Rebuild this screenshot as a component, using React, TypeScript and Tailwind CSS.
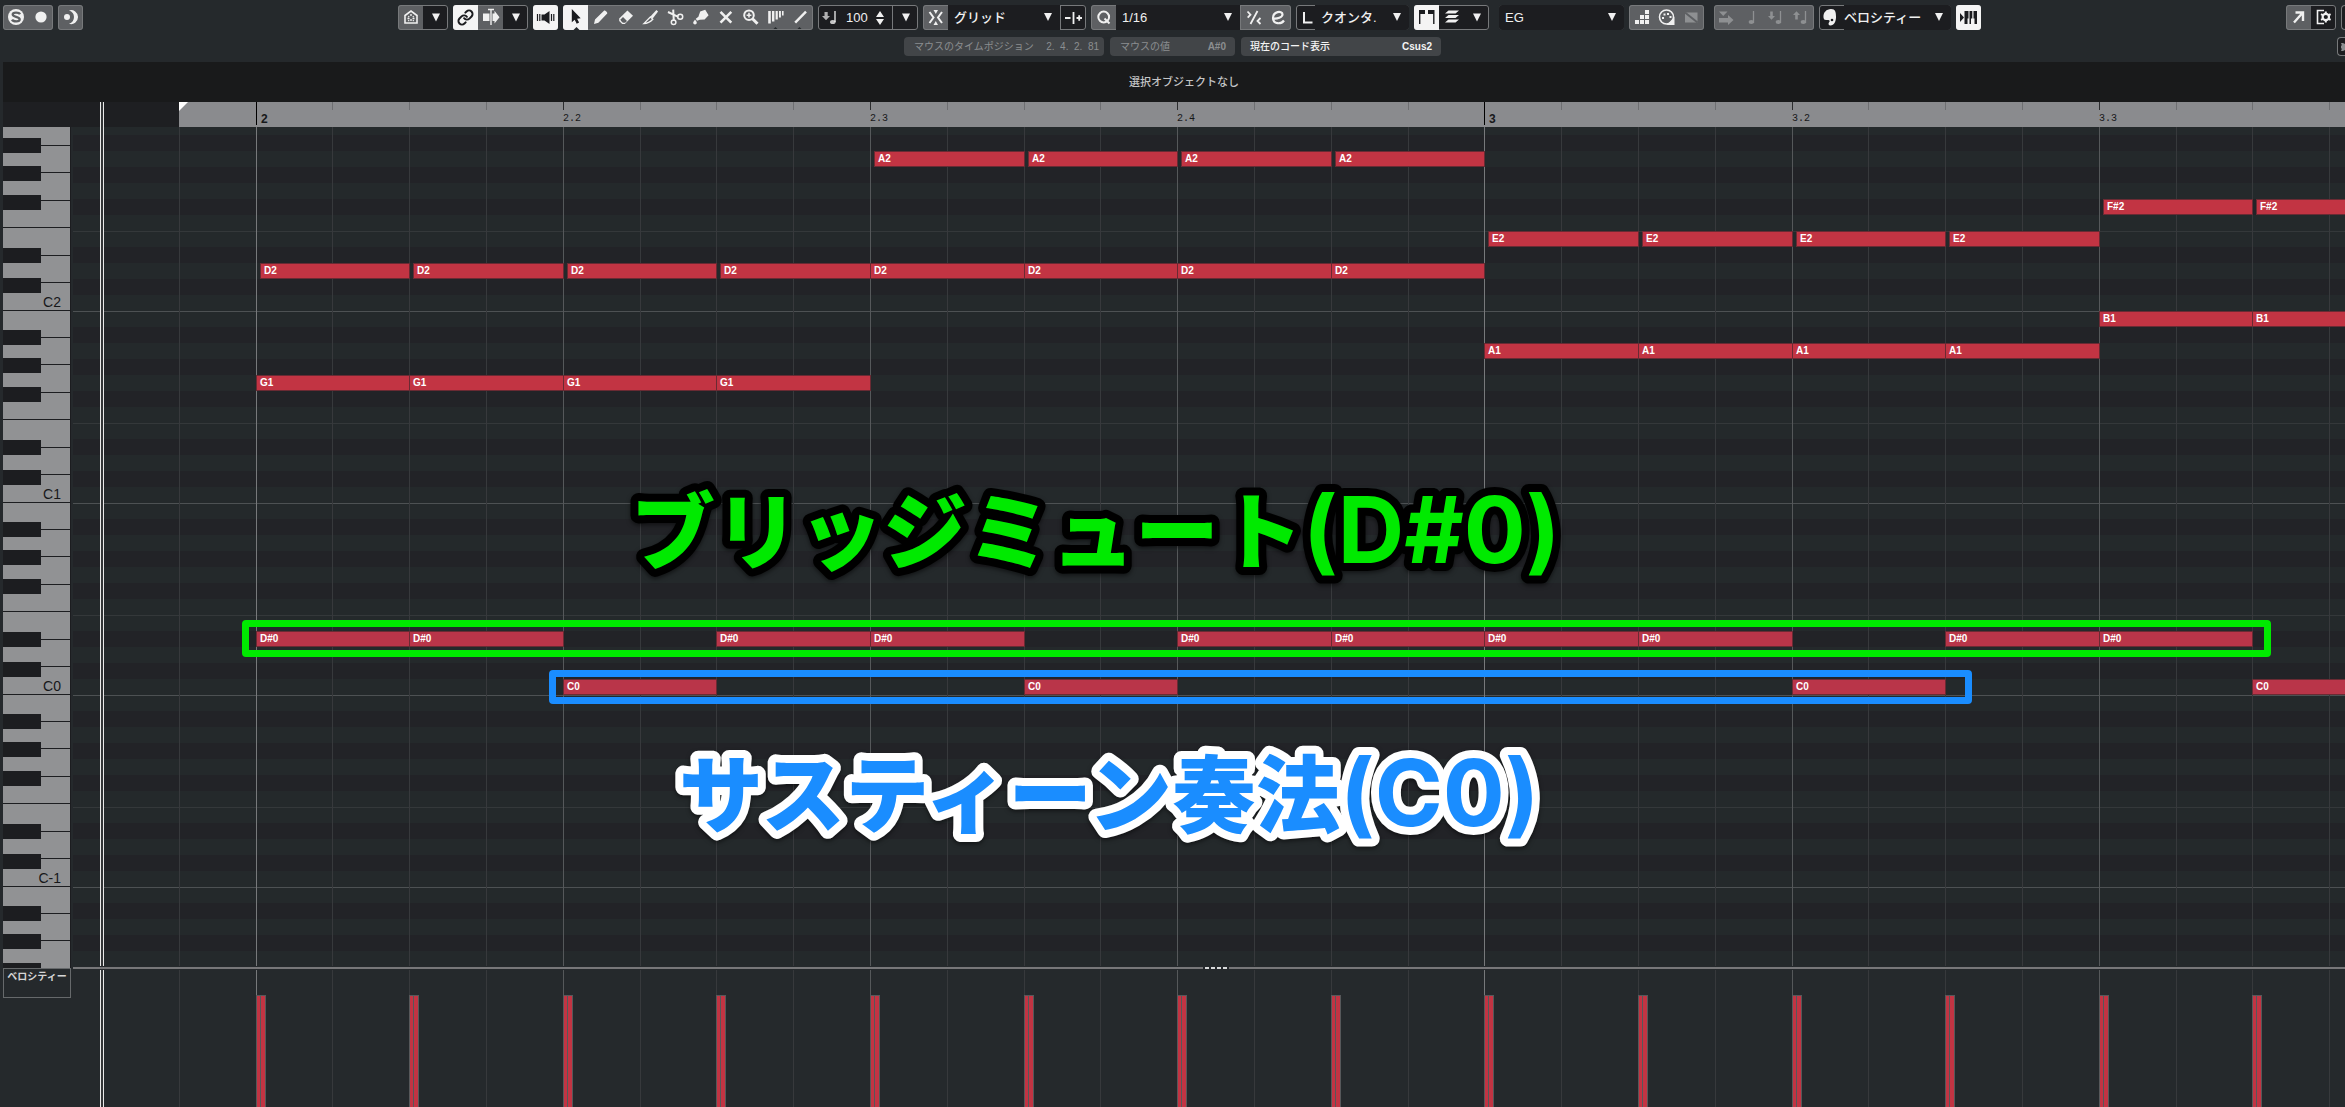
import type { ReactNode } from 'react'
import { clsx } from 'clsx'
import { Link } from 'lucide-react'

// Timeline: bar 2 begins 183px into the grid, a sixteenth is 76.8px wide
const BAR_START = 183
const SIXTEENTH = 76.8
const ROW = 16
// The grid opens in the middle of B2, 8px below its upper edge
const TOP_OFFSET = 8

const PITCHES = ['B', 'A#', 'A', 'G#', 'G', 'F#', 'F', 'E', 'D#', 'D', 'C#', 'C']
const OCTAVES = [2, 1, 0, -1, -2]

const toX = (step: number) => Math.floor(BAR_START + step * SIXTEENTH)

type Note = { name: string; step: number; late?: boolean }

const repeat = (name: string, steps: number[], late = false): Note[] =>
  steps.map((step) => ({ name, step, late }))

const NOTES: Note[] = [
  ...repeat('A2', [8, 10, 12, 14], true),
  ...repeat('F#2', [24, 26], true),
  ...repeat('E2', [16, 18, 20, 22], true),
  ...repeat('D2', [0, 2, 4, 6], true),
  ...repeat('D2', [8, 10, 12, 14]),
  ...repeat('B1', [24, 26]),
  ...repeat('A1', [16, 18, 20, 22]),
  ...repeat('G1', [0, 2, 4, 6]),
  ...repeat('D#0', [0, 2, 6, 8, 12, 14, 16, 18, 22, 24]),
  ...repeat('C0', [4, 10, 20, 26]),
]

const STEPS = Array.from({ length: 29 }, (_, i) => i - 1)
const VELOCITIES = Array.from({ length: 14 }, (_, i) => i * 2)

function noteTop(name: string) {
  const octave = Number(name.slice(-1))
  const pitch = PITCHES.indexOf(name.slice(0, -1))
  return (2 - octave) * 12 * ROW + pitch * ROW - TOP_OFFSET
}

export default function App() {
  return (
    <div className="flex min-h-screen flex-col overflow-hidden bg-[#25292c] font-['Liberation_Sans','Noto_Sans_CJK_JP',sans-serif] text-[#f0f0f0]">
      <Toolbar />
      <InfoLine />
      <div className="ml-[3px] flex h-10 items-center justify-center bg-[#191a1b] pl-5 text-[11px] font-medium text-[#c4c5c6]">
        選択オブジェクトなし
      </div>
      <Ruler />
      <div className="flex pl-[3px]">
        <Keyboard />
        <NoteGrid />
      </div>
      <VelocityLane />
    </div>
  )
}

/* ---------- toolbar ---------- */

function Toolbar() {
  return (
    <header className="flex h-[30px] items-end">
      <div className="ml-[3px] flex gap-[5px]">
        <Group>
          <Tool label="ソロ"><SoloIcon /></Tool>
          <Tool label="録音"><circle cx="13" cy="12" r="5.6" fill="currentColor" /></Tool>
        </Group>
        <Group>
          <Tool label="レトロスペクティブ録音">
            <path d="M11 5.4a7 7 0 1 1 0 13.4a7 7 0 0 0 0-13.4Z" fill="currentColor" />
            <circle cx="9" cy="12" r="3" fill="currentColor" />
          </Tool>
        </Group>
      </div>

      <div className="flex flex-1 justify-center gap-[5px] pl-2.5">
        <Group>
          <Tool label="ホーム">
            <path d="M7 18V10.5L13 6l6 4.5V18Z" fill="none" stroke="currentColor" strokeWidth="1.6" />
            <path d="M13 9v2M13 14v2M9.5 13.5h2M14.5 13.5h2M10.3 11.3l.8.8M15.7 11.3l-.8.8M10.3 16l.8-.8M15.7 16l-.8-.8" stroke="currentColor" strokeWidth="1.4" />
          </Tool>
          <Arrow />
        </Group>
        <Group>
          <button type="button" aria-label="リンク" className="relative grid w-[25px] place-items-center bg-[#f4f4f4] text-[#1b1c1f]">
            <Link size={17} strokeWidth={2.8} />
          </button>
          <Tool label="オートスクロール">
            <path d="M5 8.5h6.5v7.5H5zM14.5 8.5h2V5.8l5 6.4-5 6.4V16h-2z" fill="currentColor" />
            <path d="M10 4.5h6M13 4.5V20" stroke="currentColor" strokeWidth="1.4" />
          </Tool>
          <Arrow />
        </Group>
        <Group>
          <Tool label="試聴" active>
            <path d="M8.5 9.5h3L16.5 6v13l-5-3.5h-3z" fill="currentColor" />
            <path d="M4.5 9v7M6.8 9v7M18.5 9v7M20.8 9v7" stroke="currentColor" strokeWidth="1.2" />
          </Tool>
        </Group>
        <Group>
          <Tool label="選択" active>
            <path d="M8.8 4v13.2l2.9-2.5 2 4.1 2.4-1.2-2-3.9 3.6-.5Z" fill="currentColor" />
            <path d="M10.5 25 13.5 22l3 3Z" fill="#25292c" />
          </Tool>
          <Tool label="鉛筆">
            <path d="m6 19 1-4.6L16.2 5.6c.8-.8 3.8 2.2 3 3L10.4 17.8Z" fill="currentColor" />
          </Tool>
          <Tool label="消しゴム">
            <path d="M6.2 13.6 14.4 5.4l5.6 5.4-8.2 8.2H9.2L6.2 16Z" fill="currentColor" />
            <path d="m7.8 14.3 2.2-2.2 4 4-1.8 1.7h-2.3l-2.1-2Z" fill="#5e6063" />
          </Tool>
          <Tool label="カッター">
            <path d="m5.8 18.6 6.6-6.6 2.4 2.2c-2.4 2.6-5.2 4.2-9 4.4Z" fill="none" stroke="currentColor" strokeWidth="1.3" />
            <path d="m12.4 11.6 6-6.6 1.7 1.6-5.4 6.8Z" fill="currentColor" />
          </Tool>
          <Tool label="はさみ">
            <path d="m5 7 10.2 4.8M10.2 4.6l.6 11.4" stroke="currentColor" strokeWidth="2" />
            <circle cx="10.6" cy="17.3" r="2.3" fill="none" stroke="currentColor" strokeWidth="1.5" />
            <circle cx="17.2" cy="11.8" r="2.5" fill="none" stroke="currentColor" strokeWidth="1.5" />
          </Tool>
          <Tool label="のり">
            <path d="m12.2 6.6 5-1.8 3.4 5.4-4 4.2-4.8.4-2.8 1-1.2-2 2.6-2Z" fill="currentColor" />
            <path d="M7 14.5c1.4 1.9 1.8 2.6 1.8 3.3a1.8 1.8 0 0 1-3.6 0c0-.7.6-1.4 1.8-3.3Z" fill="currentColor" />
          </Tool>
          <Tool label="ミュート">
            <path d="m7.5 6.8 10.8 10.8M18.3 6.8 7.5 17.6" stroke="currentColor" strokeWidth="2.6" />
          </Tool>
          <Tool label="ズーム">
            <circle cx="11" cy="10.2" r="4.8" fill="none" stroke="currentColor" strokeWidth="2" />
            <path d="M8.6 10.2h4.8M11 7.8v4.8" stroke="currentColor" strokeWidth="1.6" />
            <path d="m14.5 13.7 5 5" stroke="currentColor" strokeWidth="3" />
          </Tool>
          <Tool label="コンプ">
            <path d="M5.2 6h2.6v12.5H5.2zM9 6h2.4v10.5H9zM12.6 6h2.2v8.6h-2.2zM16 6h1.9v6.6H16zM19 6h1.6v4.6H19z" fill="currentColor" />
            <path d="M9.5 25 12.5 22l3 3Z" fill="#25292c" />
          </Tool>
          <Tool label="ライン">
            <path d="m7.2 17.6 10.8-11" stroke="currentColor" strokeWidth="2.4" />
            <path d="M8.5 25 11.5 22l3 3Z" fill="#25292c" />
          </Tool>
        </Group>
        <Group>
          <div className="flex w-[74px] items-center bg-[#1c1d20]">
            <Glyph>
              <path d="M6.5 7h3.2v4H12L8 15.2 4 11h2.5Z" fill="currentColor" opacity=".7" />
              <path d="M17 6v11" stroke="currentColor" strokeWidth="1.3" />
              <ellipse cx="14.8" cy="17" rx="2.8" ry="2" fill="currentColor" opacity=".8" />
            </Glyph>
            <input aria-label="ベロシティー値" defaultValue="100" className="w-8 bg-transparent pl-[3px] text-[13px] outline-none" />
            <svg width="10" height="16" viewBox="0 0 10 16" fill="currentColor">
              <path d="M5 1l4 6H1ZM5 15l4-6H1Z" />
            </svg>
          </div>
          <div className="w-px bg-[#77797b]" />
          <Arrow />
        </Group>
        <Group>
          <Tool label="スナップ">
            <path d="m6.5 7 4 5.5-4 5.5M19 7l-4 5.5 4 5.5" fill="none" stroke="currentColor" strokeWidth="2" />
            <path d="M10.5 5H15l-2.2 4ZM10.5 20H15l-2.2-4Z" fill="currentColor" />
          </Tool>
          <Select label="スナップタイプ" value="グリッド" className="w-28" />
          <div className="w-px bg-[#77797b]" />
          <button type="button" aria-label="相対" className="w-[25px] bg-[#1c1d20]">
            <Glyph>
              <path d="M4 13h5.5M15.5 13H21M18.2 10.2v5.6" stroke="currentColor" strokeWidth="1.8" />
              <path d="M12.5 7v12" stroke="currentColor" strokeWidth="1.8" />
            </Glyph>
          </button>
        </Group>
        <Group>
          <Tool label="クオンタイズ">
            <circle cx="12.7" cy="12" r="5.4" fill="none" stroke="currentColor" strokeWidth="2" />
            <path d="m13.5 13.5 5 5" stroke="currentColor" strokeWidth="2" />
          </Tool>
          <Select label="クオンタイズ値" value="1/16" className="w-[124px]" />
          <div className="w-px bg-[#77797b]" />
          <Tool label="ソフトクオンタイズ">
            <path d="M16.5 6 9.5 19M6.5 6.5l3 3.2-2.8 3M19.5 13l-3 3 3 3" fill="none" stroke="currentColor" strokeWidth="1.8" />
          </Tool>
          <Tool label="クオンタイズパネル">
            <path d="M7.5 13.5c3 .5 9.5-1 9-4.5-.4-3.4-9.5-3-9.5 4 0 6.5 8 6.5 11 2.5" fill="none" stroke="currentColor" strokeWidth="2.2" />
          </Tool>
        </Group>
        <Group>
          <span className="flex w-[19px] items-center justify-center bg-[#1c1d20]">
            <svg width="12" height="12" viewBox="0 0 12 12" className="ml-1">
              <path d="M2 0v10.500h8.500" fill="none" stroke="currentColor" strokeWidth="2" />
            </svg>
          </span>
          <Select label="長さクオンタイズ" value="クオンタ." className="w-[94px]" />
        </Group>
        <Group>
          <Tool label="ステップ入力" active>
            <path d="M5 5h6v4H6.4v10H5zM14 5h6.5v14h-1.400V9H14z" fill="currentColor" />
          </Tool>
          <button type="button" aria-label="レイヤー" className="w-[25px] bg-[#1c1d20]">
            <Glyph>
              <path d="M9.5 5.5H20l-3.5 3H6ZM9.5 10H20l-3.5 3H6ZM9.5 14.5H20l-3.5 3H6Z" fill="currentColor" />
            </Glyph>
          </button>
          <Arrow />
        </Group>
        <div className="ml-[5px]">
          <Group>
            <Select label="パート" value="EG" className="h-[25px] w-[125px]" />
          </Group>
        </div>
        <Group>
          <Tool label="ステップ入力バー">
            <path d="M6 15h4v4H6zM11 15h4v4h-4zM16 15h4v4h-4zM11 10h4v4h-4zM16 10h4v4h-4zM16 5h4v4h-4z" fill="currentColor" />
          </Tool>
          <Tool label="MIDI 入力">
            <circle cx="12.5" cy="12" r="7" fill="none" stroke="currentColor" strokeWidth="1.6" />
            <path d="M8 12h2v2H8zM9.5 8.5h2v2h-2zM13 8h2v2h-2zM15.5 11h2v2h-2zM20.5 12v8h-8Z" fill="currentColor" />
          </Tool>
          <Tool label="オフ" dim>
            <path d="M6 7.5h12.5v10H6Z" fill="currentColor" />
            <path d="m6 7.5 12.5 10" stroke="#5e6063" strokeWidth="2" />
          </Tool>
        </Group>
        <div className="ml-[5px]">
          <Group>
            <Tool label="位置を移動" dim>
              <path d="M5 6.500h8.500L9.200 11ZM5 13h9v-3l5.500 5-5.500 5v-2.500H5Z" fill="currentColor" />
            </Tool>
            <Tool label="音符" dim><NoteShape /></Tool>
            <Tool label="下へ移調" dim>
              <NoteShape x={2} />
              <path d="M6.200 6.500h2.600V11H11l-3.500 3.800L4 11h2.200Z" fill="currentColor" />
            </Tool>
            <Tool label="上へ移調" dim>
              <NoteShape x={2} />
              <path d="M6.200 14.500h2.600V10H11L7.500 6.200 4 10h2.200Z" fill="currentColor" />
            </Tool>
          </Group>
        </div>
        <Group>
          <span className="flex w-[25px] bg-[#1c1d20]">
            <Glyph>
              <path d="M4.500 12.500C4 7.500 7.500 4 12 4s5 3.500 5 8-2 8.500-5.500 8.500c-2 0-2.500-1.800-1.400-3.200 1-1.200.6-2.300-.9-2.300H7c-1.500 0-2.300-.8-2.500-2.500Z" fill="currentColor" />
              <circle cx="13" cy="15" r="1.300" fill="#1c1d20" />
            </Glyph>
          </span>
          <Select label="カラー" value="ベロシティー" className="w-[107px]" tight />
        </Group>
        <Group>
          <Tool label="キーボード" active>
            <path d="m4 8 4 4.500L4 17ZM8.500 6h4v7.500h-1V19h-3zM13.500 13.500V6h2.800v7.500H15V19h-1.500ZM17.500 6H21v13h-2.500v-5.500h-1z" fill="currentColor" />
          </Tool>
        </Group>
      </div>

      <div className="flex gap-[5px]">
        <Group>
          <Tool label="別ウィンドウで開く">
            <path d="M8 17.500 16 8.500M9.500 7.500h7.500V16" fill="none" stroke="currentColor" strokeWidth="2.400" />
          </Tool>
          <button type="button" aria-label="レイアウト設定" className="w-[25px] bg-[#1c1d20]">
            <Glyph>
              <path d="M13 5.500H6.500v13H13" fill="none" stroke="currentColor" strokeWidth="1.600" />
              <circle cx="14.800" cy="12" r="3.200" fill="none" stroke="currentColor" strokeWidth="2.200" />
              <path d="M14.800 6.500v2M14.800 15.500v2M10 9.200l1.800 1M17.800 13.800l1.800 1M10 14.800l1.800-1M17.800 10.200l1.800-1" stroke="currentColor" strokeWidth="2" />
            </Glyph>
          </button>
        </Group>
        <div className="h-[25px] w-1 rounded-l-sm border-y border-l border-[#77797b] bg-[#1c1d20]" />
      </div>
    </header>
  )
}

function Group({ children }: { children: ReactNode }) {
  return (
    <div className="flex h-[25px] shrink-0 overflow-hidden rounded-[3px] outline -outline-offset-1 outline-[#77797b]">
      {children}
    </div>
  )
}

function Glyph({ children }: { children: ReactNode }) {
  return (
    <svg width="25" height="25" viewBox="0 0 25 25" className="shrink-0">
      {children}
    </svg>
  )
}

type ToolProps = { label: string; active?: boolean; dim?: boolean; children: ReactNode }

function Tool({ label, active, dim, children }: ToolProps) {
  return (
    <button
      type="button"
      aria-label={label}
      className={clsx(
        'w-[25px]',
        active ? 'relative bg-[#f4f4f4] text-[#1b1c1f]' : 'bg-[#5e6063]',
        dim && 'text-[#8e9092]',
      )}
    >
      <Glyph>{children}</Glyph>
    </button>
  )
}

function Arrow() {
  return (
    <button type="button" aria-label="メニューを開く" className="w-[25px] bg-[#1c1d20]">
      <Glyph>
        <path d="M9 8.500h8l-4 8Z" fill="currentColor" />
      </Glyph>
    </button>
  )
}

type SelectProps = { label: string; value: string; className: string; tight?: boolean }

function Select({ label, value, className, tight }: SelectProps) {
  return (
    <div className={clsx('relative bg-[#1c1d20]', className)}>
      <select
        aria-label={label}
        defaultValue={value}
        className={clsx(
          'h-full w-full appearance-none bg-transparent text-[13px] leading-none font-medium outline-none',
          tight ? 'pl-0' : 'pl-1.5',
        )}
      >
        <option>{value}</option>
      </select>
      <svg width="8" height="8" viewBox="0 0 8 8" className="pointer-events-none absolute top-2 right-2">
        <path d="M0 0h8L4 8Z" fill="currentColor" />
      </svg>
    </div>
  )
}

function SoloIcon() {
  return (
    <>
      <circle cx="13" cy="12" r="8" fill="currentColor" />
      <path d="M17 9.200C16 7.300 9.700 7 9.700 9.600c0 2.800 7 1.600 7 4.600 0 2.800-6.500 2.600-7.700.4" fill="none" stroke="#5e6063" strokeWidth="2.300" />
    </>
  )
}

function NoteShape({ x = 0 }: { x?: number }) {
  return (
    <g transform={`translate(${x} 0)`}>
      <path d="M14.500 6v12" stroke="currentColor" strokeWidth="1.300" />
      <ellipse cx="12.300" cy="17" rx="2.700" ry="2" fill="currentColor" />
    </g>
  )
}

/* ---------- info line ---------- */

function InfoLine() {
  return (
    <div className="relative flex h-8 justify-center gap-1.5 pt-[7px] text-[10px] text-[#8b8e90]">
      <div className="flex h-[19px] w-[200px] items-center justify-between rounded-sm bg-[#424548] pr-[5px] pl-2.5">
        <span>マウスのタイムポジション</span>
        <span className="whitespace-pre">2.  4.  2.  81</span>
      </div>
      <div className="flex h-[19px] w-[125px] items-center justify-between rounded-sm bg-[#424548] pr-[9px] pl-2.5">
        <span>マウスの値</span>
        <b>A#0</b>
      </div>
      <div className="flex h-[19px] w-[200px] items-center justify-between rounded-sm bg-[#424548] pr-[9px] pl-[9px] text-[#f4f4f4]">
        <span className="font-medium">現在のコード表示</span>
        <b>Csus2</b>
      </div>
      <button type="button" aria-label="情報ライン設定" className="absolute top-[7px] right-0 flex h-[19px] w-2 items-center justify-end rounded-l-sm border-y border-l border-[#77797b] bg-[#1c1d20]">
        <svg width="4" height="8" viewBox="0 0 4 8" fill="currentColor">
          <path d="M0 0h2l2 1v6L2 8H0l1-2.500H0v-3h1Z" />
        </svg>
      </button>
    </div>
  )
}

/* ---------- ruler ---------- */

function Ruler() {
  return (
    <div className="ml-[3px] flex h-[25px] bg-[#1e1f22] pl-[70px]">
      <div className="relative flex-1 overflow-hidden">
        <div className="ml-[106px] h-full bg-[#8a8b8e]">
          <svg width="9" height="9" viewBox="0 0 9 9">
            <path d="M0 0h9L0 9Z" fill="#fff" />
          </svg>
        </div>
        {STEPS.slice(1).map((step) => {
          const bar = step % 16 === 0
          const beat = step % 4 === 0
          return (
            <div
              key={step}
              className={clsx(
                'absolute top-0 border-l',
                bar ? 'h-[23px] border-black' : beat ? 'h-2 border-[#2c2d2f]' : 'h-2 border-[#6e6f72]',
              )}
              style={{ left: toX(step) }}
            />
          )
        })}
        {STEPS.filter((s) => s >= 0 && s % 4 === 0).map((step) => {
          const bar = 2 + Math.floor(step / 16)
          const beat = (step % 16) / 4
          return (
            <span
              key={step}
              className={clsx(
                'absolute bottom-0.5 leading-3 text-[#17181a]',
                beat === 0 ? 'pl-[5px] text-xs font-bold' : "font-['Liberation_Mono',monospace] text-[10px]",
              )}
              style={{ left: toX(step) }}
            >
              {beat === 0 ? bar : `${bar}.${beat + 1}`}
            </span>
          )
        })}
        <Playhead />
      </div>
    </div>
  )
}

function Playhead() {
  return <div className="absolute inset-y-0 left-[27px] w-1 border-x border-[#e8e8e8] bg-[#333537]" />
}

/* ---------- keyboard ---------- */

function Keyboard() {
  return (
    <div className="h-[841px] w-[68px] shrink-0 overflow-hidden border-r border-[#1c1d20]">
      <div className="-mt-2">
        {OCTAVES.map((octave) => (
          <div key={octave} className="relative h-48 bg-[#919294]">
            <div className="flex h-full flex-col">
              <WhiteKey tall={false} />
              <WhiteKey tall={false} />
              <WhiteKey tall />
              <WhiteKey tall={false} />
              <WhiteKey tall />
              <WhiteKey tall={false} />
              {/* the lowest octave is cut before its C */}
              <WhiteKey tall>{octave > -2 && `C${octave}`}</WhiteKey>
            </div>
            <div className="absolute inset-y-0 left-0 w-[38px]">
              <div className="mt-[19px] h-[15px] bg-[#1c1d20]" />
              <div className="mt-[13px] h-[15px] bg-[#1c1d20]" />
              <div className="mt-[14px] h-[15px] bg-[#1c1d20]" />
              <div className="mt-[38px] h-[15px] bg-[#1c1d20]" />
              <div className="mt-[15px] h-[15px] bg-[#1c1d20]" />
            </div>
          </div>
        ))}
      </div>
    </div>
  )
}

function WhiteKey({ tall, children }: { tall: boolean; children?: ReactNode }) {
  return (
    <div className={clsx('border-b border-[#1c1d20] pt-[11px] pr-[9px] text-right text-sm leading-4 text-[#17181a]', tall ? 'h-7' : 'h-[27px]')}>
      {children}
    </div>
  )
}

/* ---------- note grid ---------- */

function GridLines() {
  return STEPS.map((step) => (
    <div
      key={step}
      className={clsx(
        'absolute inset-y-0 border-l',
        step % 16 === 0 ? 'border-[#77797b]' : step % 4 === 0 ? 'border-[#55585a]' : 'border-[#37393c]',
      )}
      style={{ left: toX(step) }}
    />
  ))
}

function rowStyle(pitch: string) {
  if (pitch.includes('#')) return 'bg-[#222327]'
  if (pitch === 'B') return 'bg-[#24292b] border-t border-[#4d5153]'
  if (pitch === 'E') return 'bg-[#24292b] border-t border-[#34383a]'
  return 'bg-[#24292b]'
}

function NoteGrid() {
  return (
    <div className="relative ml-0.5 h-[839px] flex-1 overflow-hidden">
      <div className="-mt-2">
        {OCTAVES.map((octave) =>
          PITCHES.map((pitch) => <div key={pitch + octave} className={clsx('h-4', rowStyle(pitch))} />),
        )}
      </div>
      <GridLines />
      <Playhead />
      {NOTES.map(({ name, step, late }) => {
        const left = toX(step) + (late ? 4 : 0)
        return (
          <div
            key={name + step}
            className={clsx(
              'absolute flex h-4 items-center border border-[#6a2a33] pl-[3px] text-[10px] leading-none font-bold text-white',
              name.endsWith('0') ? 'bg-[#b93549]' : 'bg-[#c23443]',
            )}
            style={{ left, top: noteTop(name), width: toX(step + 2) - left + 1 }}
          >
            {name}
          </div>
        )
      })}

      <div className="absolute top-[493px] left-[169px] h-[37px] w-[2029px] rounded border-[7px] border-[#00ea00]" />
      <div className="absolute top-[543px] left-[476px] h-[34px] w-[1423px] rounded border-[7px] border-[#1a8dff]" />
      <Caption className="absolute top-[340px] left-[558px] fill-[#00ea00] stroke-black" kana="ブリッジミュート" pitch="(D#0)" />
      <Caption className="absolute top-[603px] left-[606px] fill-[#1a8dff] stroke-white" kana="サスティーン奏法" pitch="(C0)" />
    </div>
  )
}

type CaptionProps = { className: string; kana: string; pitch: string }

// SVG text, because only there the outline gets round corners
function Caption({ className, kana, pitch }: CaptionProps) {
  return (
    <svg width="960" height="130" className={clsx('overflow-visible drop-shadow-[0_2px_2px_rgba(0,0,0,0.5)]', className)}>
      <text x="0" y="96" strokeWidth="16" strokeLinejoin="round" paintOrder="stroke" className="font-['Noto_Sans_CJK_JP',sans-serif] text-[84px] font-black">
        {kana}
        <tspan className="font-['Inter',sans-serif] text-[92px] font-bold">{pitch}</tspan>
      </text>
    </svg>
  )
}

/* ---------- velocity lane ---------- */

function VelocityLane() {
  return (
    <div className="flex flex-1 pl-[3px]">
      <div className="h-[30px] w-[68px] shrink-0 border border-[#66696b] pt-0.5 text-center text-[10px] leading-3 font-bold text-[#d4d5d6]">
        ベロシティー
      </div>
      <div className="-mt-px ml-0.5 flex flex-1 flex-col">
        <div className="mb-px flex h-0.5 gap-0.5">
          <div className="w-[1130px] bg-[#777779]" />
          <div className="w-1 bg-[#d8dada]" />
          <div className="w-1 bg-[#d8dada]" />
          <div className="w-1 bg-[#d8dada]" />
          <div className="w-1 bg-[#d8dada]" />
          <div className="flex-1 bg-[#777779]" />
        </div>
        <div className="relative flex-1 overflow-hidden">
          <GridLines />
          <Playhead />
          {VELOCITIES.map((step) => (
            <div
              key={step}
              className="absolute top-[25px] bottom-0 flex w-2.5 gap-px border-x border-t border-[#56585a] bg-[#56585a]"
              style={{ left: toX(step) }}
            >
              <div className="w-[3px] bg-[#c23443]" />
              <div className="flex-1 bg-[#c23443]" />
            </div>
          ))}
        </div>
      </div>
    </div>
  )
}
